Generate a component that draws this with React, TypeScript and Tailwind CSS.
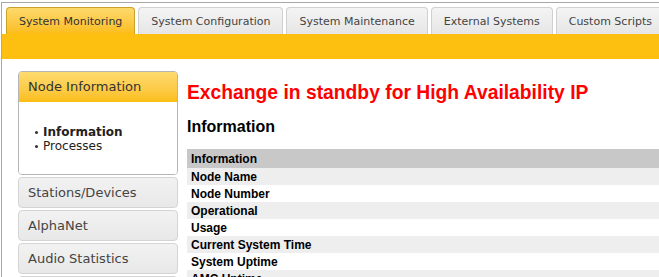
import React from 'react';

const tabs = [
  { label: 'System Monitoring', active: true },
  { label: 'System Configuration' },
  { label: 'System Maintenance' },
  { label: 'External Systems' },
  { label: 'Custom Scripts' },
];

const sideItems = ['Stations/Devices', 'AlphaNet', 'Audio Statistics', 'Logs'];

const rows = [
  'Node Name',
  'Node Number',
  'Operational',
  'Usage',
  'Current System Time',
  'System Uptime',
  'AMC Uptime',
];

const verdana = { fontFamily: '"DejaVu Sans", Verdana, sans-serif' };

export default function App() {
  return (
    <div className="w-[659px] h-[277px] overflow-hidden bg-white pl-[1px] pt-[2px]">
      <div className="border-l border-t border-[#a8a8a8] w-[720px] h-[300px]">
        {/* tabs */}
        <div className="flex gap-[3px] pl-[4px] pt-[4px] h-[31px] items-end" style={verdana}>
          {tabs.map((t) => (
            <div
              key={t.label}
              className={
                t.active
                  ? 'h-[27px] pt-[2px] px-3 flex items-center rounded-t-[4px] border border-b-0 border-[#c9a227] bg-gradient-to-b from-[#fdd96a] to-[#fbbd10] text-[11px] text-[#333] whitespace-nowrap'
                  : 'h-[27px] pt-[2px] px-3 flex items-center rounded-t-[4px] border border-b-0 border-[#d0d0d0] bg-gradient-to-b from-[#f4f4f4] to-[#e6e6e6] text-[11px] text-[#444] whitespace-nowrap'
              }
            >
              {t.label}
            </div>
          ))}
        </div>
        <div className="h-[25px] bg-[#fdc010]" />

        <div className="flex pt-[12px] pl-[16px]">
          {/* sidebar */}
          <div className="w-[160px] shrink-0 flex flex-col gap-[2px]" style={verdana}>
            <div className="rounded-[4px] border border-[#b5b5b5] overflow-hidden">
              <div className="h-[30px] flex items-center px-[9px] bg-gradient-to-b from-[#fedb6e] to-[#fbbe12] text-[13px] text-[#333]">
                Node Information
              </div>
              <div className="h-[72px] bg-white pt-[23px] pl-[16px] text-[12px] leading-[14px] text-[#222]">
                <div className="flex items-center gap-[5px]">
                  <span className="w-[3px] h-[3px] rounded-full bg-[#333]" />
                  <span className="font-bold">Information</span>
                </div>
                <div className="flex items-center gap-[5px]">
                  <span className="w-[3px] h-[3px] rounded-full bg-[#333]" />
                  <span>Processes</span>
                </div>
              </div>
            </div>
            {sideItems.map((s) => (
              <div
                key={s}
                className="h-[31px] rounded-[4px] border border-[#d4d4d4] bg-gradient-to-b from-[#f2f2f2] to-[#e8e8e8] flex items-center px-[9px] text-[13px] text-[#444]"
              >
                {s}
              </div>
            ))}
          </div>

          {/* content */}
          <div className="ml-[9px] flex-1" style={{ fontFamily: '"Liberation Sans", Arial, sans-serif' }}>
            <h1 className="mt-[11px] text-[19.3px] leading-[22px] font-bold text-[#ff0000] whitespace-nowrap">
              Exchange in standby for High Availability IP
            </h1>
            <h2 className="mt-[13px] text-[16px] leading-[20px] font-bold text-black">Information</h2>
            <div className="mt-[12px] w-[520px] text-[12px] font-bold text-black">
              <div className="h-[19px] bg-[#c8c8c8] flex items-center px-[4px]">Information</div>
              {rows.map((r, i) => (
                <div
                  key={r}
                  className={`h-[17px] flex items-center px-[4px] ${i % 2 === 0 ? 'bg-[#eeeeee]' : 'bg-white'}`}
                >
                  {r}
                </div>
              ))}
            </div>
          </div>
        </div>
      </div>
    </div>
  );
}
